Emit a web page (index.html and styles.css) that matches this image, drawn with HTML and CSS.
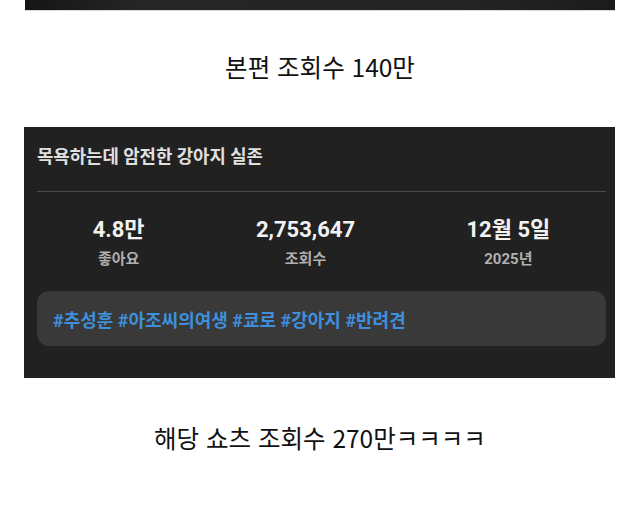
FILE: index.html
```html
<!DOCTYPE html>
<html lang="ko">
<head>
  <meta charset="UTF-8">
  <meta name="viewport" content="width=device-width, initial-scale=1.0">
  <title>조회수 비교</title>
  <link rel="stylesheet" href="styles.css">
</head>
<body>

  <div class="top-strip"></div>

  <p class="caption caption-top">본편 조회수 140만</p>

  <div class="video-card">
    <h2 class="video-title">목욕하는데 암전한 강아지 실존</h2>
    <hr class="divider">

    <div class="stats">
      <div class="stat">
        <div class="stat-value">4.8만</div>
        <div class="stat-label">좋아요</div>
      </div>
      <div class="stat">
        <div class="stat-value">2,753,647</div>
        <div class="stat-label">조회수</div>
      </div>
      <div class="stat">
        <div class="stat-value">12월 5일</div>
        <div class="stat-label">2025년</div>
      </div>
    </div>

    <div class="tags">#추성훈 #아조씨의여생 #쿄로 #강아지 #반려견</div>
  </div>

  <p class="caption caption-bottom">해당 쇼츠 조회수 270만ㅋㅋㅋㅋ</p>

</body>
</html>
```

FILE: styles.css
```css
body {
  margin: 0;
  padding: 0;
  background-color: #fff;
  font-family: Roboto, "Noto Sans CJK KR", sans-serif;
  width: 640px;
}

.top-strip {
  margin: 0 25px;
  height: 10px;
  background: linear-gradient(90deg, #151515 0%, #262626 20%, #232323 80%, #1b1b1b 100%);
  border-bottom: 1px solid #d8d8d8;
}

.caption {
  margin: 0;
  display: flex;
  align-items: center;
  justify-content: center;
  box-sizing: border-box;
  font-family: "Noto Sans CJK KR", sans-serif;
  font-size: 24.5px;
  font-weight: 400;
  color: #111;
}

.caption-top {
  height: 116px;
  padding-bottom: 5px;
}

.caption-bottom {
  height: 118px;
}

/* dark shorts info card */
.video-card {
  margin-left: 24px;
  width: 591px;
  height: 251px;
  box-sizing: border-box;
  padding: 20px 9px 0 13px;
  background-color: #212121;
}

.video-title {
  margin: 0;
  font-family: Roboto, "Noto Sans CJK KR", sans-serif;
  font-size: 17.8px;
  line-height: 20px;
  font-weight: 700;
  color: #e0e0e0;
}

.divider {
  margin: 24px 0 0;
  border: none;
  height: 1px;
  background-color: #4a4a4a;
}

.stats {
  display: flex;
  justify-content: space-around;
  margin-top: 25px;
}

.stat {
  display: flex;
  flex-direction: column;
  align-items: center;
}

.stat-value {
  font-size: 22px;
  line-height: 26px;
  font-weight: 700;
  color: #f2f2f2;
}

.stat-label {
  margin-top: 6px;
  font-size: 15px;
  line-height: 20px;
  font-weight: 700;
  color: #b0b0b0;
}

.tags {
  margin-top: 22px;
  height: 55px;
  display: flex;
  align-items: center;
  padding-left: 16px;
  border-radius: 12px;
  background-color: #393939;
  font-size: 18px;
  font-weight: 700;
  color: #3f8fdc;
}
```
